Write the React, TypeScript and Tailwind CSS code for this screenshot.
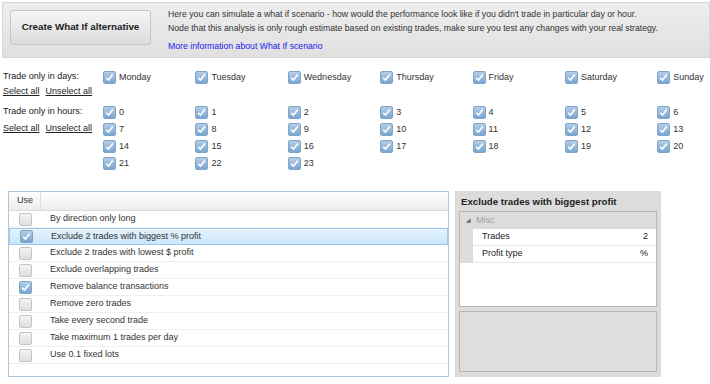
const days = ["Monday", "Tuesday", "Wednesday", "Thursday", "Friday", "Saturday", "Sunday"];
const hours = Array.from({ length: 24 }, (_, i) => i);

const rules = [
  { text: "By direction only long", on: false },
  { text: "Exclude 2 trades with biggest % profit", on: true, selected: true },
  { text: "Exclude 2 trades with lowest $ profit", on: false },
  { text: "Exclude overlapping trades", on: false },
  { text: "Remove balance transactions", on: true },
  { text: "Remove zero trades", on: false },
  { text: "Take every second trade", on: false },
  { text: "Take maximum 1 trades per day", on: false },
  { text: "Use 0.1 fixed lots", on: false },
];

const Check = ({ on = true }: { on?: boolean }) =>
  on ? (
    <span className="inline-flex h-[13px] w-[13px] shrink-0 items-center justify-center rounded-[2px] border border-[#7ea4c8] bg-gradient-to-b from-[#b4cde6] to-[#7aa6d0]">
      <svg width="9" height="9" viewBox="0 0 9 9">
        <path d="M1.2 4.8 L3.5 7 L7.8 1.5" fill="none" stroke="#fff" strokeWidth="1.6" />
      </svg>
    </span>
  ) : (
    <span className="inline-block h-[13px] w-[13px] shrink-0 rounded-[2px] border border-[#c4c4c4] bg-gradient-to-b from-[#f4f4f4] to-[#dedede]" />
  );

const SelectLinks = () => (
  <div className="flex h-[16px] items-center gap-[6px] text-[#222]">
    <span className="underline">Select all</span>
    <span className="underline">Unselect all</span>
  </div>
);

const App: React.FC = () => {
  return (
    <div className="h-[384px] w-[710px] overflow-hidden bg-white font-['Liberation_Sans',Arial,sans-serif] text-[9px] text-[#333]">
      {/* top bar */}
      <div className="ml-[2px] mt-[2px] flex h-[56px] w-[708px] border border-[#d8d8d8] bg-gradient-to-b from-[#eeeeee] to-[#e0e0e0]">
        <button className="ml-[7px] mt-[7px] h-[35px] w-[141px] shrink-0 rounded-[3px] border border-[#c6c6c6] bg-gradient-to-b from-[#f6f6f6] to-[#dcdcdc] text-[9.8px] font-bold text-[#222]">
          Create What If alternative
        </button>
        <div className="ml-[17px] min-w-0 flex-1 whitespace-nowrap pt-[4px] text-[8.7px] leading-[14px] text-[#333]">
          <div>Here you can simulate a what if scenario - how would the performance look like if you didn't trade in particular day or hour.</div>
          <div>Node that this analysis is only rough estimate based on existing trades, make sure you test any changes with your real strategy.</div>
          <div className="mt-[4px] text-[#2222ee]">More information about What If scenario</div>
        </div>
      </div>

      {/* days */}
      <div className="mt-[10px] flex h-[36px]">
        <div className="w-[103px] shrink-0 pl-[3px] pt-[1px] leading-[14px] text-[#222]">
          <div>Trade only in days:</div>
          <SelectLinks />
        </div>
        <div className="grid h-[17px] shrink-0 grid-cols-[repeat(7,92.4px)] pt-[2px]">
          {days.map((d) => (
            <div key={d} className="flex items-center gap-[3px]">
              <Check />
              <span>{d}</span>
            </div>
          ))}
        </div>
      </div>

      {/* hours */}
      <div className="flex">
        <div className="w-[103px] shrink-0 pl-[3px] leading-[14px] text-[#222]">
          <div className="h-[16px]">Trade only in hours:</div>
          <SelectLinks />
        </div>
        <div className="grid shrink-0 grid-cols-[repeat(7,92.4px)] auto-rows-[17px]">
          {hours.map((h) => (
            <div key={h} className="flex items-center gap-[3px]">
              <Check />
              <span>{h}</span>
            </div>
          ))}
        </div>
      </div>

      {/* bottom */}
      <div className="mt-[19px] flex h-[186px] gap-[6px] pl-[8px]">
        <div className="w-[441px] border border-[#a9c9e6] bg-white">
          <div className="flex h-[19px] border-b border-[#dcdcdc] bg-gradient-to-b from-[#ffffff] to-[#ececec] text-[#333]">
            <div className="flex w-[32px] items-center border-r border-[#dcdcdc] pl-[8px]">Use</div>
            <div className="flex-1" />
          </div>
          {rules.map((r) => (
            <div
              key={r.text}
              className={
                r.selected
                  ? "flex h-[17px] items-center border border-[#9fcaee] bg-gradient-to-b from-[#e6f3fd] to-[#cbe6fb]"
                  : "flex h-[17px] items-center border-b border-[#f0f0f0]"
              }
            >
              <div className="flex w-[32px] justify-center">
                <Check on={r.on} />
              </div>
              <div className="pl-[9px] text-[#333]">{r.text}</div>
            </div>
          ))}
        </div>

        <div className="w-[206px] bg-[#dcdcdc] px-[4px] pt-[3px]">
          <div className="h-[17px] pl-[2px] pt-[1px] text-[9.7px] font-bold leading-[14px] text-[#222]">
            Exclude trades with biggest profit
          </div>
          <div className="h-[96px] border border-[#b6b6b6] bg-white">
            <div className="flex h-[17px] items-center gap-[5px] bg-[#dcdcdc] pl-[6px] text-[#a0a0a0]">
              <span className="text-[6px] text-[#666]">◢</span>
              <span>Misc</span>
            </div>
            {[
              ["Trades", "2"],
              ["Profit type", "%"],
            ].map(([k, v]) => (
              <div key={k} className="flex h-[17px]">
                <div className="w-[13px] bg-[#dcdcdc]" />
                <div className="flex flex-1 items-center justify-between border-b border-[#e8e8e8] pl-[9px] pr-[8px] text-[#222]">
                  <span>{k}</span>
                  <span>{v}</span>
                </div>
              </div>
            ))}
          </div>
          <div className="mt-[4px] h-[61px] border border-[#b6b6b6] bg-[#dedede]" />
        </div>
      </div>
    </div>
  );
};

export default App;
